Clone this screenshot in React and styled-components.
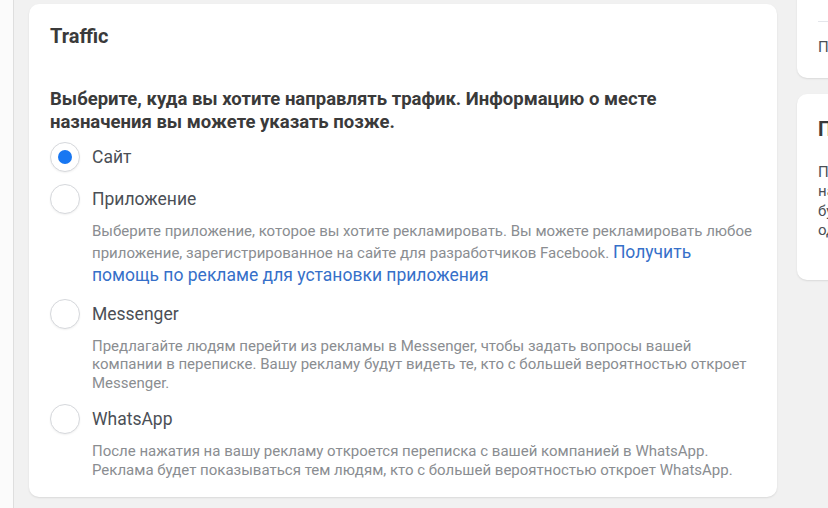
import React from "react"
import styled, { createGlobalStyle } from "styled-components"

const GlobalStyle = createGlobalStyle`
  body {
    margin: 0;
    background: #f1f1f1;
    font-family: Roboto, "Liberation Sans", Arial, sans-serif;
    overflow: hidden;
  }
`

const Page = styled.div`
  display: flex;
  height: 508px;
  overflow: hidden;
`

const SideStrip = styled.div`
  flex: 0 0 13px;
  background: #fbfbfb;
  border-right: 1px solid #dedede;
`

const Content = styled.div`
  display: flex;
  align-items: flex-start;
  gap: 20px;
  padding: 4px 0 0 15px;
`

const Card = styled.div`
  flex: 0 0 748px;
  box-sizing: border-box;
  background: #fff;
  border-radius: 10px;
  box-shadow: 0 1px 2px rgba(0, 0, 0, 0.1);
  padding: 20px 21px 18px;
`

const Title = styled.div`
  font-size: 20px;
  font-weight: 700;
  color: #3a3a3a;
  line-height: 24px;
`

const Question = styled.div`
  margin-top: 40px;
  font-size: 18.5px;
  font-weight: 700;
  color: #3a3a3a;
  line-height: 23px;
`

const Options = styled.div`
  display: flex;
  flex-direction: column;
  gap: 12px;
  margin-top: 8px;
`

const Option = styled.div`
  display: flex;
  gap: 12px;
`

const Radio = styled.div`
  flex: 0 0 30px;
  height: 30px;
  box-sizing: border-box;
  border-radius: 50%;
  border: 1px solid #d6d8dc;
  background: #fff;
  box-shadow: 0 1px 2px rgba(0, 0, 0, 0.06);
  display: flex;
  align-items: center;
  justify-content: center;
  &::after {
    content: "";
    width: 14px;
    height: 14px;
    border-radius: 50%;
    background: ${(p) => (p.$checked ? "#1877f2" : "transparent")};
  }
`

const Body = styled.div`
  padding-top: 3px;
`

const Label = styled.div`
  font-size: 17.5px;
  color: #4b4f56;
  line-height: 24px;
`

const Desc = styled.div`
  margin-top: 11px;
  font-size: 15px;
  color: #8a8d91;
  line-height: 18.5px;
`

const Link = styled.a`
  font-size: 17.5px;
  color: #3670c9;
  text-decoration: none;
  line-height: 23px;
`

const Aside = styled.div`
  flex: 0 0 360px;
  display: flex;
  flex-direction: column;
  gap: 16px;
  margin-top: -43px;
`

const SideCard = styled.div`
  background: #fff;
  border-radius: 10px;
  box-shadow: 0 1px 2px rgba(0, 0, 0, 0.1);
  padding: ${(p) => p.$pad};
`

const Divider = styled.div`
  height: 1px;
  background: #e4e6eb;
  margin-bottom: 16px;
`

const SideText = styled.div`
  font-size: 15px;
  color: #4b4f56;
  line-height: 19.5px;
  white-space: nowrap;
`

const SideTitle = styled.div`
  font-size: 20px;
  font-weight: 700;
  color: #3a3a3a;
  line-height: 24px;
  margin-bottom: 22px;
`

const options = [
  { label: "Сайт", checked: true },
  {
    label: "Приложение",
    desc: (
      <>
        Выберите приложение, которое вы хотите рекламировать. Вы можете
        рекламировать любое приложение, зарегистрированное на сайте для
        разработчиков Facebook.{" "}
        <Link href="#">Получить помощь по рекламе для установки приложения</Link>
      </>
    ),
  },
  {
    label: "Messenger",
    desc: "Предлагайте людям перейти из рекламы в Messenger, чтобы задать вопросы вашей компании в переписке. Вашу рекламу будут видеть те, кто с большей вероятностью откроет Messenger.",
  },
  {
    label: "WhatsApp",
    desc: "После нажатия на вашу рекламу откроется переписка с вашей компанией в WhatsApp. Реклама будет показываться тем людям, кто с большей вероятностью откроет WhatsApp.",
  },
]

const App = () => {
  return (
    <Page>
      <GlobalStyle />
      <SideStrip />
      <Content>
        <Card>
          <Title>Traffic</Title>
          <Question>
            Выберите, куда вы хотите направлять трафик. Информацию о месте
            назначения вы можете указать позже.
          </Question>
          <Options>
            {options.map((o) => (
              <Option key={o.label}>
                <Radio $checked={o.checked} />
                <Body>
                  <Label>{o.label}</Label>
                  {o.desc && <Desc>{o.desc}</Desc>}
                </Body>
              </Option>
            ))}
          </Options>
        </Card>
        <Aside>
          <SideCard $pad="60px 21px 20px">
            <Divider />
            <SideText>Подробнее о параметрах</SideText>
          </SideCard>
          <SideCard $pad="23px 21px 39px">
            <SideTitle>Подсказка</SideTitle>
            <SideText>
              Показывайте рекламу тем, кто вероятнее всего
              <br />
              нажмет на нее и перейдет в место назначения,
              <br />
              будь то сайт, приложение или переписка
              <br />
              одном из мессенджеров.
            </SideText>
          </SideCard>
        </Aside>
      </Content>
    </Page>
  )
}

export default App
